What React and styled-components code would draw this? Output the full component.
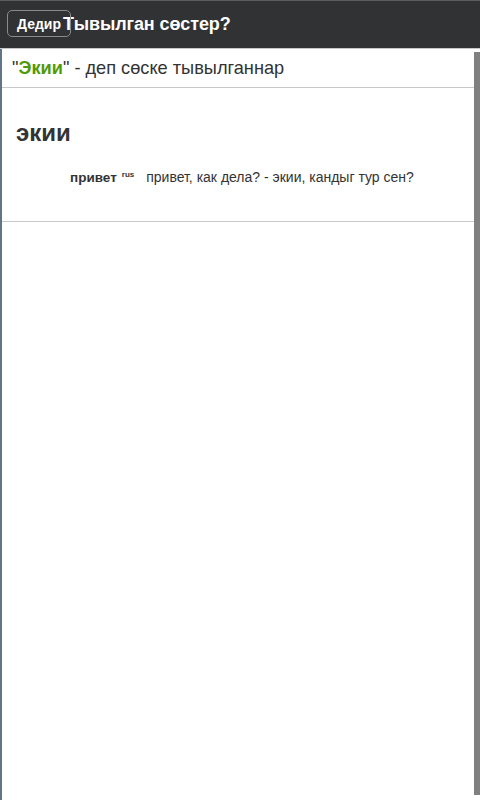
import React from "react";
import styled, { createGlobalStyle } from "styled-components";

const Global = createGlobalStyle`
  html, body { margin: 0; padding: 0; background: #fff; }
  body { font-family: "Liberation Sans", Arial, sans-serif; color: #333; }
`;

const Page = styled.div`
  display: flex;
  flex-direction: column;
  height: 800px;
  overflow: hidden;
`;

const Header = styled.header`
  position: relative;
  height: 47px;
  background: #313233;
  border-top: 1px solid #5a5c5e;
  border-bottom: 1px solid #c8c8c8;
  display: flex;
  align-items: center;
  padding-left: 63px;
`;

const Title = styled.h1`
  margin: 0;
  font-size: 18px;
  font-weight: bold;
  color: #fff;
  white-space: nowrap;
  letter-spacing: -0.1px;
`;

const BackButton = styled.button`
  position: absolute;
  left: 7px;
  top: 9px;
  width: 64px;
  height: 27px;
  border: 1px solid #8a8a8a;
  border-radius: 5px;
  background: transparent;
  color: #fff;
  font-family: inherit;
  font-size: 14px;
  font-weight: bold;
  padding: 0;
  text-align: center;
`;

const Body = styled.div`
  flex: 1;
  display: flex;
  min-height: 0;
`;

const Main = styled.main`
  flex: 1;
  border-left: 2px solid #647488;
`;

const Track = styled.div`
  width: 6px;
  padding: 3px 0 5px 0;
  display: flex;
`;

const Thumb = styled.div`
  flex: 1;
  background: #808080;
`;

const SearchRow = styled.div`
  height: 38px;
  display: flex;
  align-items: center;
  padding-left: 10px;
  font-size: 18.2px;
  color: #333;
  border-bottom: 1px solid #c8c8c8;
`;

const Hit = styled.span`
  color: #4f9a06;
  font-weight: bold;
`;

const Entry = styled.section`
  padding: 31px 0 35px 14px;
  border-bottom: 1px solid #c8c8c8;
`;

const Word = styled.h2`
  margin: 0;
  font-size: 24px;
  font-weight: bold;
  color: #333;
  line-height: 28px;
`;

const Translation = styled.p`
  margin: 22px 0 0 54px;
  font-size: 14px;
  line-height: 16px;
  color: #333;
`;

const Term = styled.b`
  font-weight: bold;
  font-size: 13.5px;
`;

const Lang = styled.sup`
  font-size: 8px;
  font-weight: bold;
  line-height: 0;
  vertical-align: 5px;
  margin: 0 12px 0 5px;
`;

export default function App() {
  return (
    <>
      <Global />
      <Page>
        <Header>
          <Title>Тывылган сөстер?</Title>
          <BackButton>Дедир</BackButton>
        </Header>
        <Body>
          <Main>
            <SearchRow>
              "<Hit>Экии</Hit>" - деп сөске тывылганнар
            </SearchRow>
            <Entry>
              <Word>экии</Word>
              <Translation>
                <Term>привет</Term>
                <Lang>rus</Lang>
                привет, как дела? - экии, кандыг тур сен?
              </Translation>
            </Entry>
          </Main>
          <Track>
            <Thumb />
          </Track>
        </Body>
      </Page>
    </>
  );
}
